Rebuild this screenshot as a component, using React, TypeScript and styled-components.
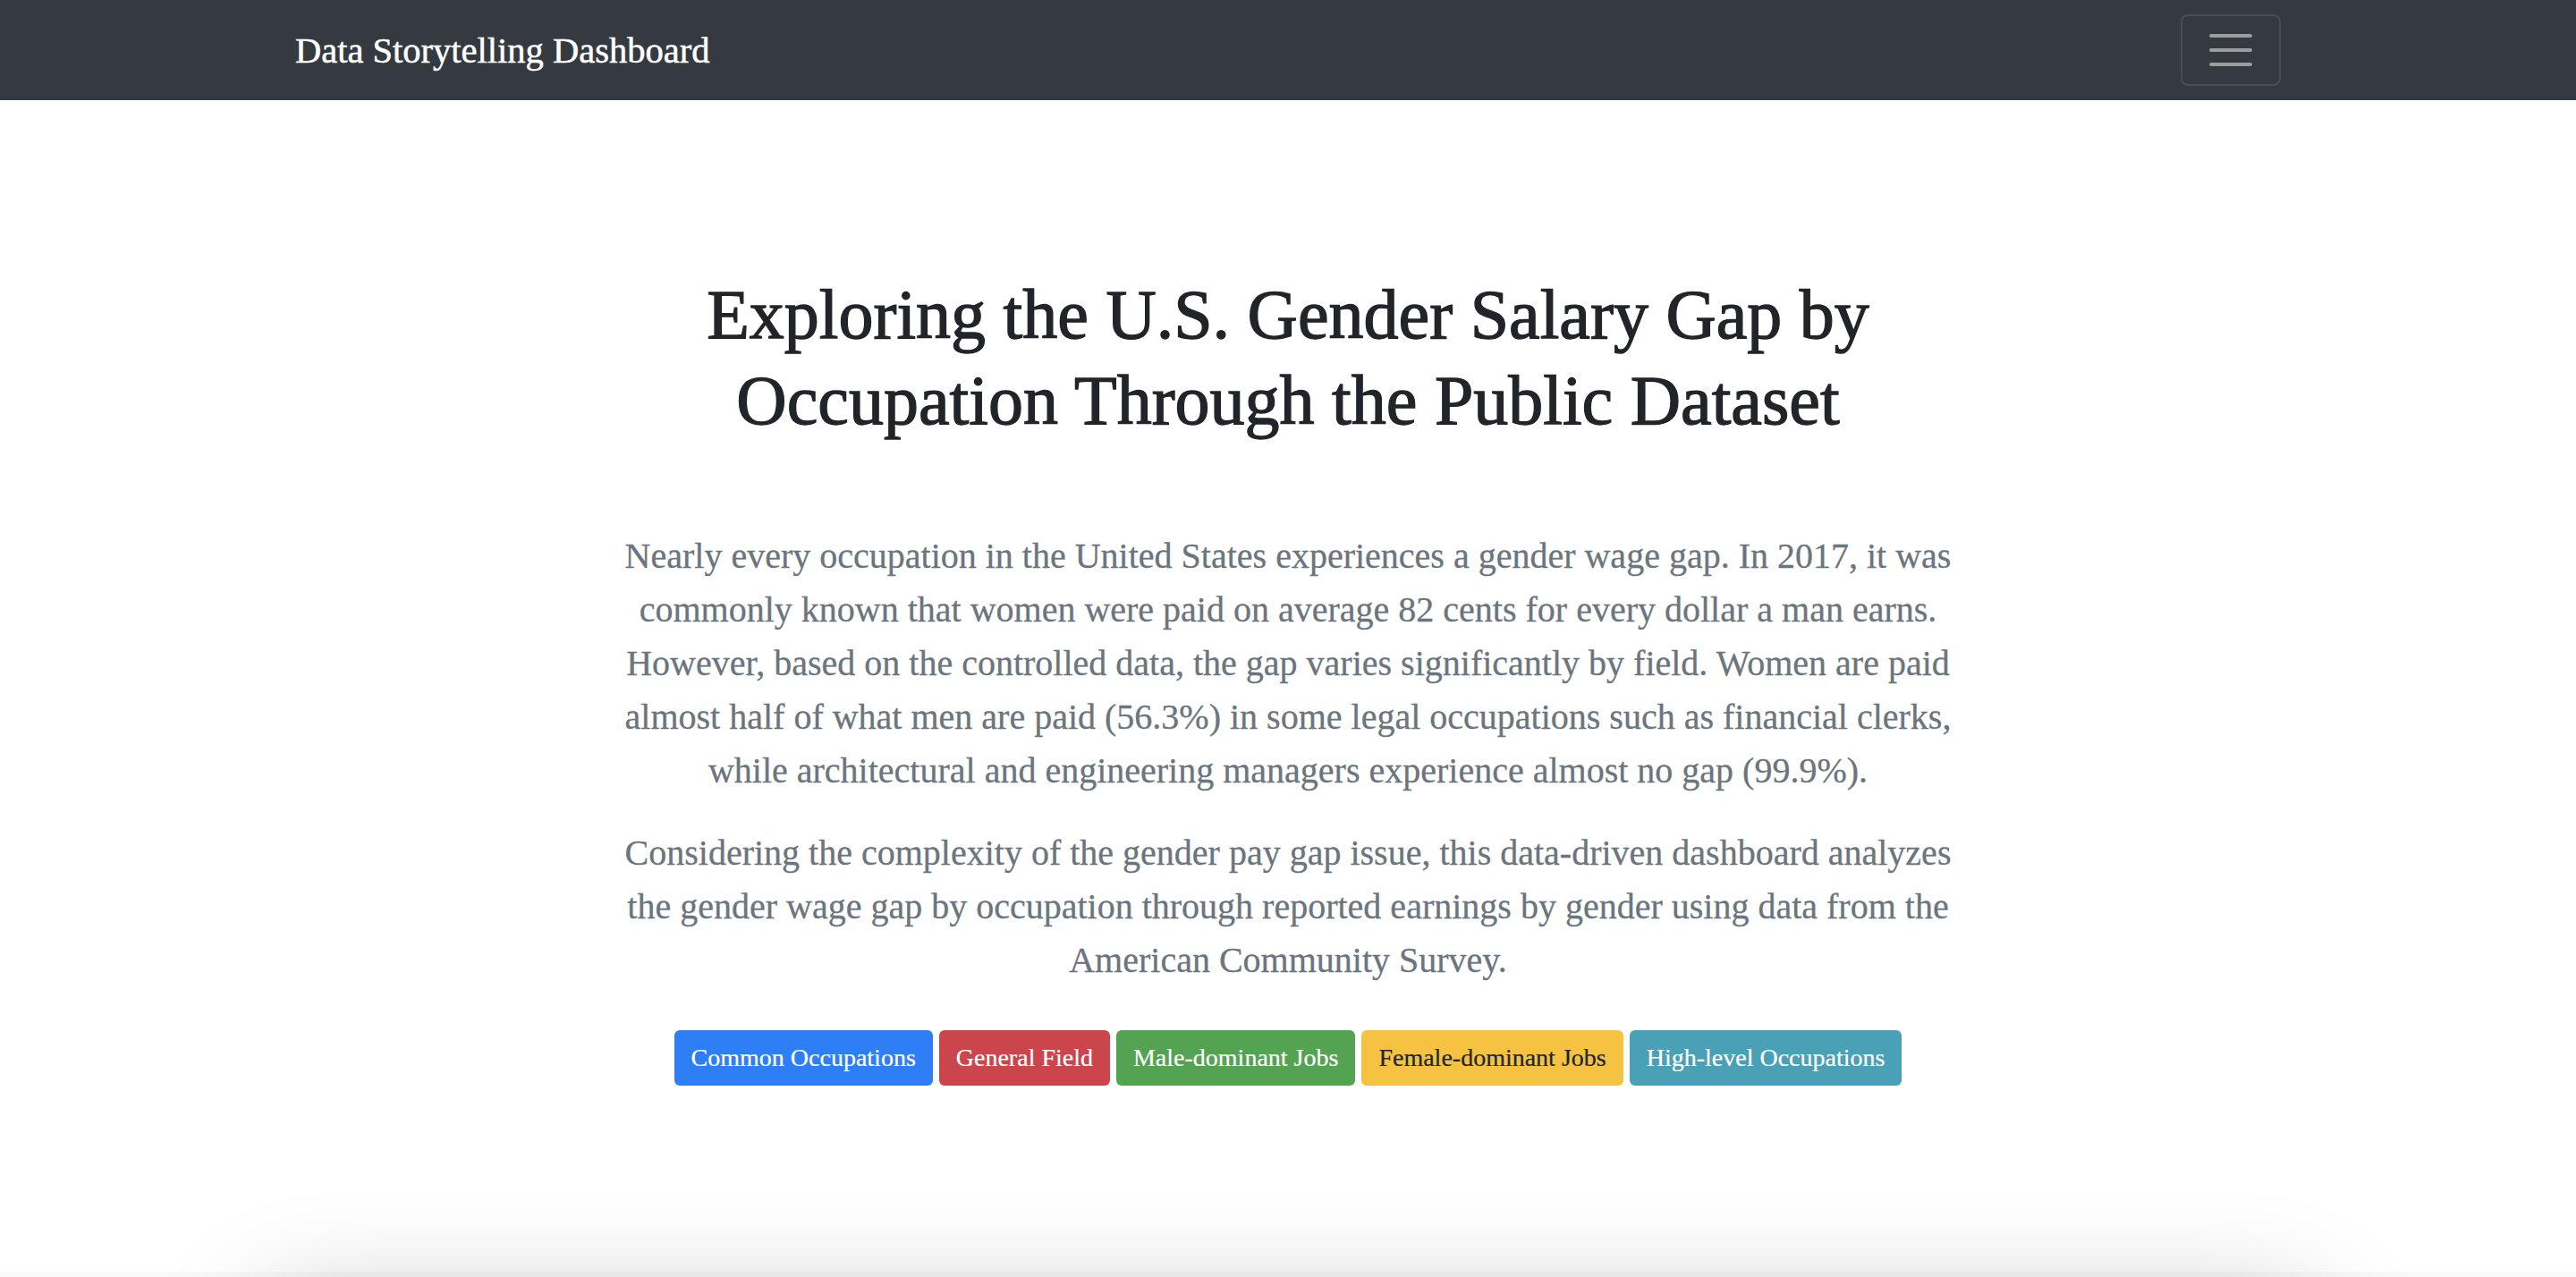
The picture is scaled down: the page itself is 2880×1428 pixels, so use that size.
import React from "react";
import styled, { createGlobalStyle } from "styled-components";

const GlobalStyle = createGlobalStyle`
  html, body {
    margin: 0;
    padding: 0;
    background: #ffffff;
  }
  body {
    font-family: "Liberation Serif", "Times New Roman", serif;
    color: #212529;
    -webkit-font-smoothing: antialiased;
  }
  * { box-sizing: border-box; }
`;

const Navbar = styled.nav`
  background: #343a40;
  height: 112px;
  display: flex;
  justify-content: center;
`;

const NavInner = styled.div`
  width: 2220px;
  display: flex;
  align-items: center;
  justify-content: space-between;
`;

const Brand = styled.a`
  font-size: 40.5px;
  line-height: 60px;
  color: #ffffff;
  text-decoration: none;
  padding-top: 2px;
  -webkit-text-stroke: 0.5px #ffffff;
`;

const Toggler = styled.button`
  width: 112px;
  height: 80px;
  border: 2px solid rgba(255, 255, 255, 0.1);
  border-radius: 8px;
  background: transparent;
  display: flex;
  align-items: center;
  justify-content: center;
  padding: 0;
`;

const Hero = styled.section`
  padding: 192px 0 0;
  display: flex;
  flex-direction: column;
  align-items: center;
  text-align: center;
`;

const Title = styled.h1`
  margin: 0 0 96px;
  font-size: 78px;
  line-height: 96px;
  font-weight: 400;
  color: #212529;
  -webkit-text-stroke: 1.3px #212529;
`;

const Lead = styled.p`
  margin: 0 0 32px;
  font-size: 40px;
  line-height: 60px;
  color: #6c757d;
  white-space: nowrap;
  -webkit-text-stroke: 0.3px #6c757d;

  &:last-of-type {
    margin-bottom: 0;
  }
`;

const ButtonRow = styled.div`
  display: flex;
  gap: 7px;
  margin-top: 48px;
`;

const tones: Record<string, { bg: string; fg: string }> = {
  primary: { bg: "#2e7ff6", fg: "#ffffff" },
  danger: { bg: "#cb454c", fg: "#ffffff" },
  success: { bg: "#53a352", fg: "#ffffff" },
  warning: { bg: "#f5c242", fg: "#212529" },
  info: { bg: "#4aa0b5", fg: "#ffffff" },
};

const Btn = styled.a<{ $tone: string }>`
  display: inline-flex;
  align-items: center;
  height: 62px;
  padding: 0 19px;
  border-radius: 6px;
  font-size: 28px;
  line-height: 42px;
  background: ${(p) => tones[p.$tone].bg};
  color: ${(p) => tones[p.$tone].fg};
  -webkit-text-stroke: 0.2px ${(p) => tones[p.$tone].fg};
  text-decoration: none;
  cursor: pointer;
`;

const Gallery = styled.section`
  margin-top: 208px;
  background: #f8f9fa;
  padding-top: 48px;
  min-height: 600px;
  display: flex;
  justify-content: center;
`;

const Card = styled.div`
  width: 2280px;
  height: 500px;
  background: #ffffff;
  box-shadow: 0 0 120px rgba(0, 0, 0, 0.3);
`;

const TogglerIcon = () => (
  <svg width="60" height="60" viewBox="0 0 30 30" aria-hidden="true">
    <path
      d="M4 7h22M4 15h22M4 23h22"
      stroke="rgba(255,255,255,0.5)"
      strokeWidth="2"
      strokeLinecap="round"
      strokeMiterlimit="10"
    />
  </svg>
);

export default function App() {
  return (
    <>
      <GlobalStyle />
      <Navbar>
        <NavInner>
          <Brand href="#">Data Storytelling Dashboard</Brand>
          <Toggler aria-label="Toggle navigation">
            <TogglerIcon />
          </Toggler>
        </NavInner>
      </Navbar>
      <Hero>
        <Title>
          Exploring the U.S. Gender Salary Gap by
          <br />
          Occupation Through the Public Dataset
        </Title>
        <Lead>
          Nearly every occupation in the United States experiences a gender wage gap. In 2017, it was
          <br />
          commonly known that women were paid on average 82 cents for every dollar a man earns.
          <br />
          However, based on the controlled data, the gap varies significantly by field. Women are paid
          <br />
          almost half of what men are paid (56.3%) in some legal occupations such as financial clerks,
          <br />
          while architectural and engineering managers experience almost no gap (99.9%).
        </Lead>
        <Lead>
          Considering the complexity of the gender pay gap issue, this data-driven dashboard analyzes
          <br />
          the gender wage gap by occupation through reported earnings by gender using data from the
          <br />
          American Community Survey.
        </Lead>
        <ButtonRow>
          <Btn $tone="primary">Common Occupations</Btn>
          <Btn $tone="danger">General Field</Btn>
          <Btn $tone="success">Male-dominant Jobs</Btn>
          <Btn $tone="warning">Female-dominant Jobs</Btn>
          <Btn $tone="info">High-level Occupations</Btn>
        </ButtonRow>
      </Hero>
      <Gallery>
        <Card />
      </Gallery>
    </>
  );
}
